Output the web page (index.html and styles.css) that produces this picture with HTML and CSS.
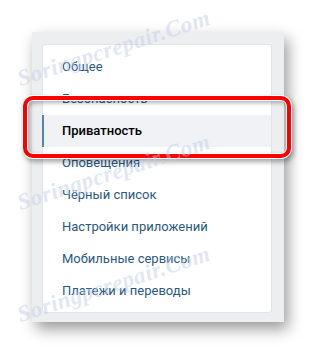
FILE: index.html
```html
<!DOCTYPE html>
<html lang="ru">
<head>
  <meta charset="UTF-8">
  <title>Настройки</title>
  <link rel="stylesheet" href="styles.css">
</head>
<body>

  <div class="page">
    <div class="panel">
      <ul class="menu">
        <li class="item">Общее</li>
        <li class="item">Безопасность</li>
        <li class="item selected">Приватность</li>
        <li class="item">Оповещения</li>
        <li class="item">Чёрный список</li>
        <li class="item">Настройки приложений</li>
        <li class="item">Мобильные сервисы</li>
        <li class="item">Платежи и переводы</li>
      </ul>
    </div>

    <div class="highlight"></div>

    <span class="mark mark-1">Soringpcrepair.Com</span>
    <span class="mark mark-2">Soringpcrepair.Com</span>
    <span class="mark mark-3">Soringpcrepair.Com</span>
  </div>

</body>
</html>
```

FILE: styles.css
```css
body { margin: 0; background: #fff; font-family: Roboto, "Liberation Sans", Arial, sans-serif; overflow: hidden; }
.page { position: relative; width: 316px; height: 353px; padding: 32px 0 0 32px; box-sizing: border-box; }

.panel { width: 252px; height: 290px; box-sizing: border-box; padding: 12px 12px 9px 10px; background: #edeef0; box-shadow: 4px 7px 14px rgba(0, 0, 0, 0.4); }
.menu { list-style: none; margin: 0; padding: 6px 0; background: #fff; border: 1px solid #e3e4e8; border-radius: 3px; height: 100%; box-sizing: border-box; }
.item { height: 32px; line-height: 32px; padding-left: 19px; font-size: 13px; color: #2a5885; }
.item.selected { margin-left: -1px; padding-left: 18px; border-left: 2px solid #5f80a7; background: #f0f2f5; color: #000; font-weight: 500; }

.highlight { position: absolute; left: 23px; top: 96px; width: 268px; height: 62px; box-sizing: border-box; border: 4px solid #f00; border-radius: 10px;
  box-shadow: 0 0 0 1px #fff, 2px 3px 5px 1px rgba(0, 0, 0, 0.35), inset 0 0 0 1px #fff, inset 2px 2px 4px 1px rgba(0, 0, 0, 0.3); }

.mark { position: absolute; font-family: "Liberation Serif", serif; font-style: italic; font-weight: bold; font-size: 23px; color: rgba(195, 207, 230, 0.5); transform-origin: left bottom; transform: rotate(-18deg); white-space: nowrap; letter-spacing: 0.5px; }
.mark-1 { left: 22px; top: 66px; }
.mark-2 { left: 22px; top: 190px; }
.mark-3 { left: 22px; top: 302px; }
```
